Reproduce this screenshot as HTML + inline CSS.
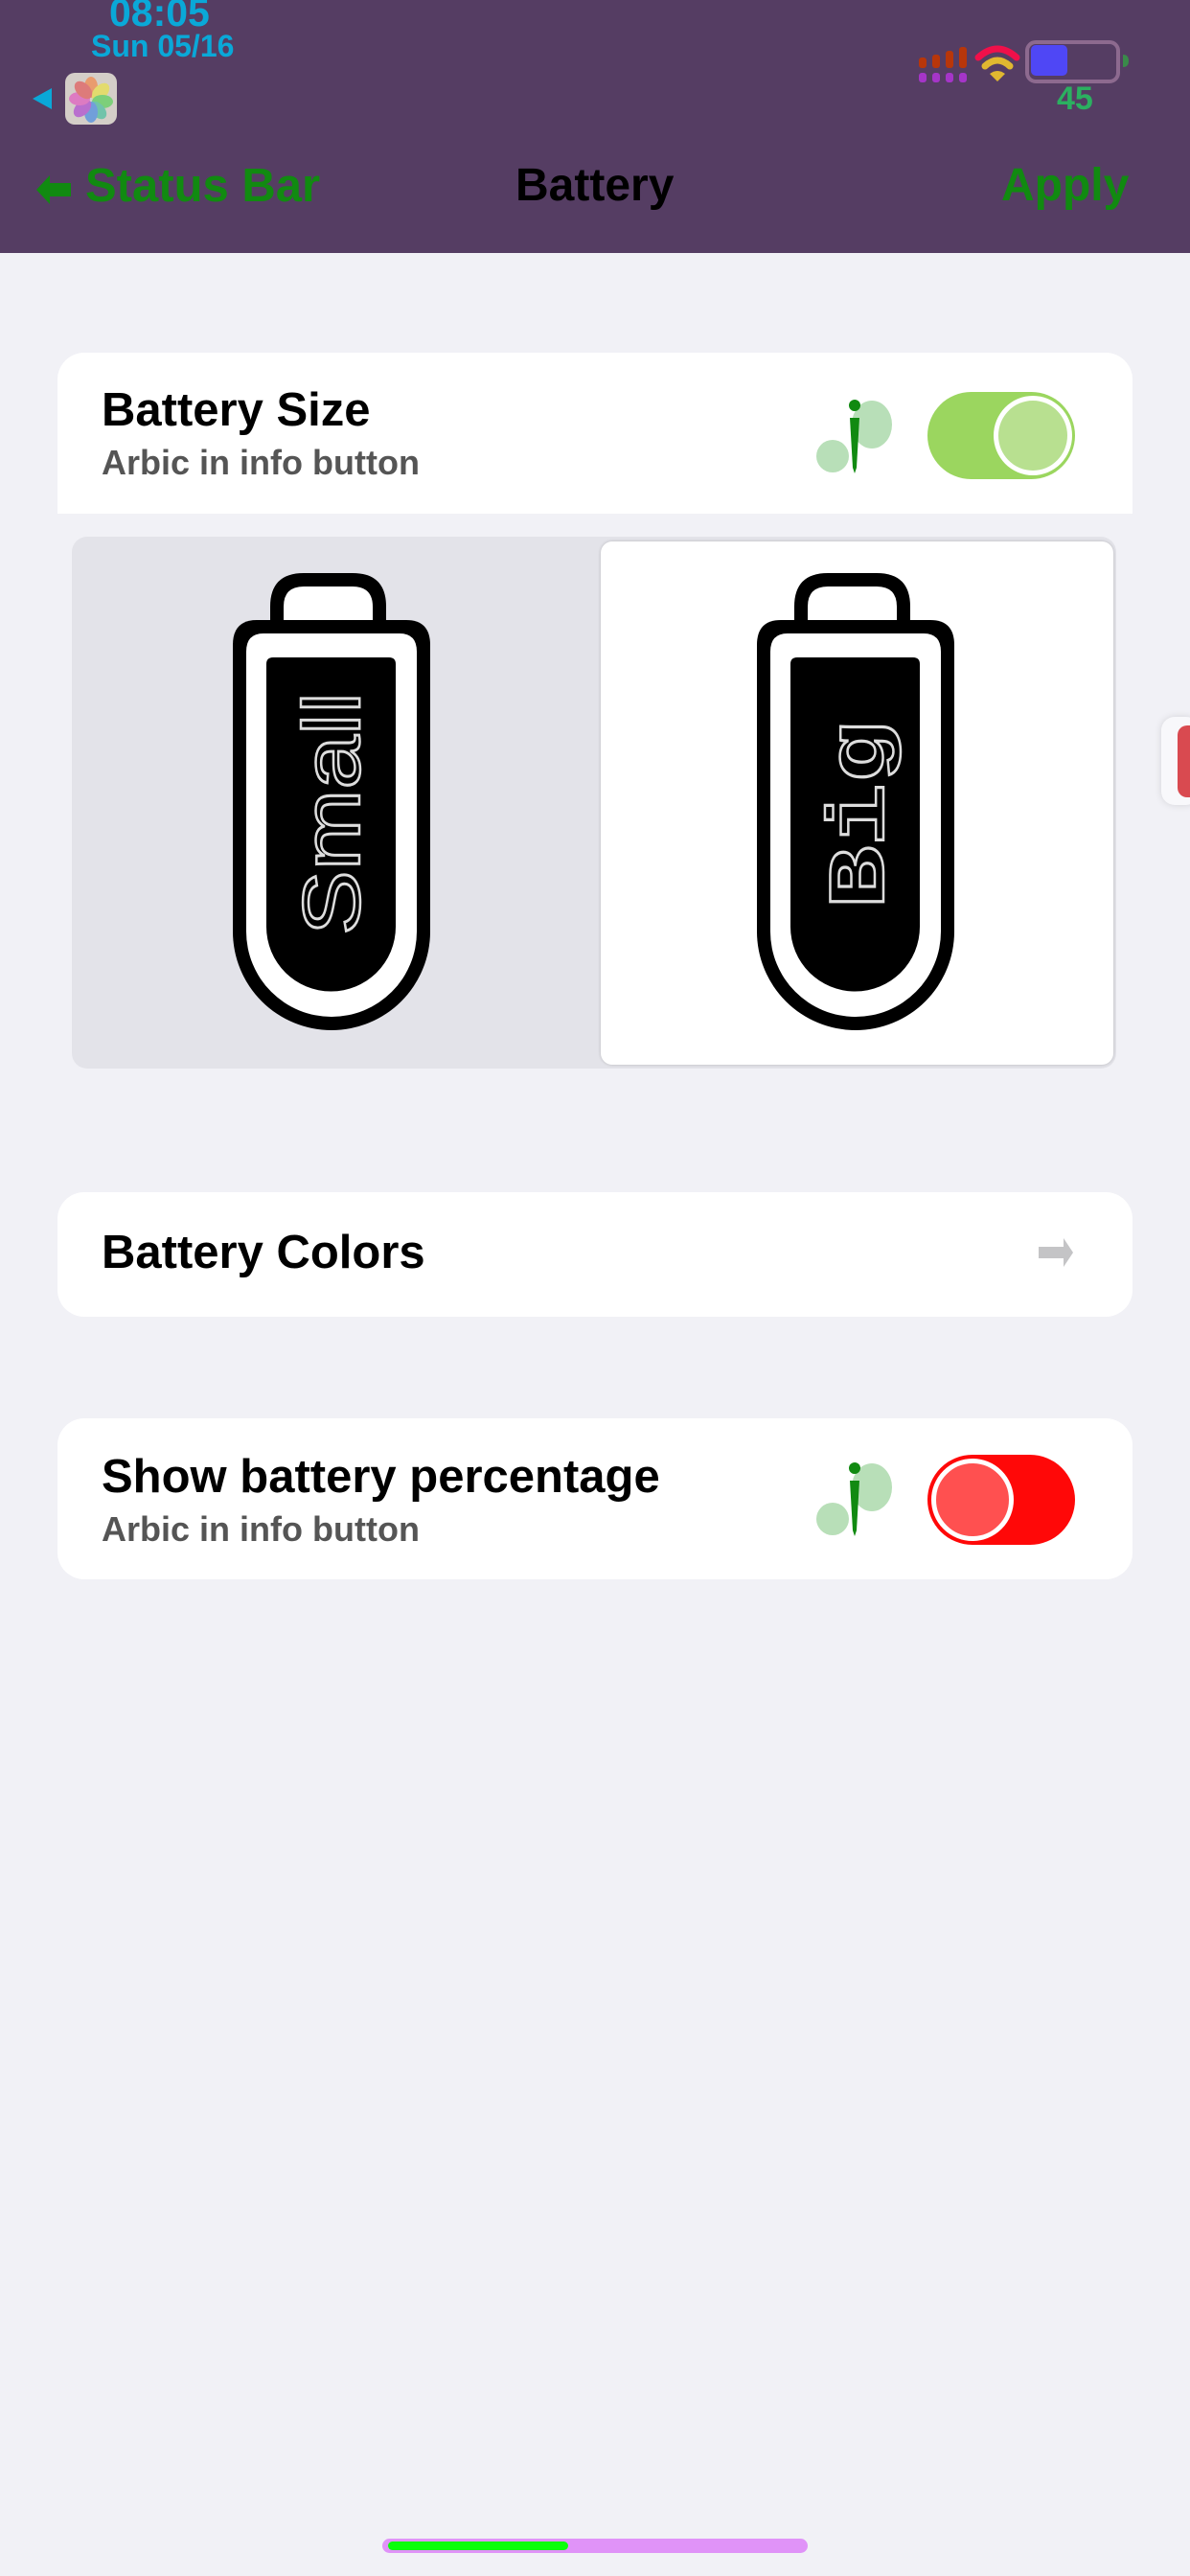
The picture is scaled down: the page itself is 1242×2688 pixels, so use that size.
<!DOCTYPE html>
<html><head><meta charset="utf-8">
<style>
*{margin:0;padding:0;box-sizing:border-box}
body{width:1242px;height:2688px;background:#f1f1f6;font-family:"Liberation Sans",sans-serif;position:relative;overflow:hidden}
.abs{position:absolute}
.hdr{left:0;top:0;width:1242px;height:264px;background:#553d63}
.card{position:absolute;left:60px;width:1122px;background:#fff}
.t{position:absolute;left:46px;font-weight:bold;font-size:49px;color:#000;white-space:nowrap}
.s{position:absolute;left:46px;font-weight:bold;font-size:36px;color:#555;white-space:nowrap}
</style></head><body>
<div class="abs hdr"></div>
<div class="abs" style="left:114px;top:-10px;font-size:41px;font-weight:bold;color:#0aa8d8">08:05</div>
<div class="abs" style="left:95px;top:30px;font-size:32px;font-weight:bold;color:#0aa8d8">Sun 05/16</div>
<svg class="abs" style="left:30px;top:90px" width="26" height="26"><path d="M24,2 L24,24 L4,13Z" fill="#0aa8d8"/></svg>
<svg class="abs" style="left:68px;top:76px" width="54" height="54" viewBox="0 0 54 54">
<rect x="0" y="0" width="54" height="54" rx="10" fill="#d4cec8"/>
<g opacity="0.75">
<ellipse cx="27" cy="15" rx="7" ry="11" fill="#f08a50"/>
<ellipse cx="37" cy="20" rx="7" ry="11" fill="#e8e050" transform="rotate(45 37 20)"/>
<ellipse cx="39" cy="30" rx="7" ry="11" fill="#60d060" transform="rotate(90 39 30)"/>
<ellipse cx="34" cy="39" rx="7" ry="11" fill="#50c0a0" transform="rotate(135 34 39)"/>
<ellipse cx="27" cy="41" rx="7" ry="11" fill="#5090e0"/>
<ellipse cx="18" cy="37" rx="7" ry="11" fill="#b050d0" transform="rotate(45 18 37)"/>
<ellipse cx="15" cy="27" rx="7" ry="11" fill="#e060c0" transform="rotate(90 15 27)"/>
<ellipse cx="19" cy="18" rx="7" ry="11" fill="#e06060" transform="rotate(135 19 18)"/>
</g></svg>
<svg class="abs" style="left:955px;top:40px" width="230" height="50">
<g fill="#b8360a"><rect x="4" y="20" width="8" height="11" rx="3"/><rect x="18" y="17" width="8" height="14" rx="3"/><rect x="32" y="13" width="8" height="18" rx="3"/><rect x="46" y="9" width="8" height="22" rx="3"/></g>
<g fill="#a535c8"><rect x="4" y="36" width="8" height="10" rx="3"/><rect x="18" y="36" width="8" height="10" rx="3"/><rect x="32" y="36" width="8" height="10" rx="3"/><rect x="46" y="36" width="8" height="10" rx="3"/></g>
<path d="M66,20 Q86,2 106,20" stroke="#f0104a" stroke-width="7" fill="none" stroke-linecap="round"/>
<path d="M73,29 Q86,17 99,29" stroke="#e0b830" stroke-width="7" fill="none" stroke-linecap="round"/>
<path d="M78,37 Q86,31 94,37 L86,45Z" fill="#e0b830"/>
<rect x="117" y="4" width="95" height="41" rx="9" fill="none" stroke="#8d6a8f" stroke-width="4"/>
<rect x="121" y="7" width="38" height="32" rx="5" fill="#4f47f5"/>
<path d="M217,17 Q223,17 223,23.5 Q223,30 217,30Z" fill="#3a8a4a"/>
</svg>
<div class="abs" style="left:1103px;top:84px;font-size:34px;font-weight:bold;color:#2bb060">45</div>
<svg class="abs" style="left:36px;top:180px" width="40" height="36"><path d="M2,18 L16,3 V11 H38 V25 H16 V33Z" fill="#118a11"/></svg>
<div class="abs" style="left:89px;top:166px;font-size:49px;font-weight:bold;color:#118a11">Status Bar</div>
<div class="abs" style="left:538px;top:166px;font-size:48px;font-weight:bold;color:#000">Battery</div>
<div class="abs" style="left:1045px;top:166px;font-size:48px;font-weight:bold;color:#118a11">Apply</div>

<div class="card" style="top:368px;height:168px;border-radius:28px 28px 0 0">
<div class="t" style="top:32px">Battery Size</div>
<div class="s" style="top:94px">Arbic in info button</div>
</div>
<svg class="abs" style="left:850px;top:414px" width="82" height="82" viewBox="0 0 82 82">
<ellipse cx="60" cy="29" rx="21" ry="25" fill="#b8dfb8"/><circle cx="19" cy="62" r="17" fill="#b8dfb8"/>
<circle cx="42" cy="9" r="6" fill="#118a11"/><path d="M37,22 L47,22 L44,74 L42,80 L40,74Z" fill="#118a11"/></svg>
<div class="abs" style="left:968px;top:409px;width:154px;height:91px;border-radius:46px;background:#9bd65f"></div>
<div class="abs" style="left:1037px;top:413px;width:82px;height:83px;border-radius:50%;background:#b8e090;border:5px solid #fff"></div>

<div class="abs" style="left:75px;top:560px;width:1090px;height:555px;background:#e3e3e9;border-radius:16px"></div>
<div class="abs" style="left:627px;top:565px;width:535px;height:546px;background:#fff;border-radius:12px;box-shadow:0 0 3px rgba(0,0,0,.2)"></div>
<svg class="abs" style="left:243px;top:598px" width="210" height="480" viewBox="0 0 210 480">
<path d="M39,50 V35 Q39,0 74,0 H125 Q160,0 160,35 V50Z" fill="#000"/><path d="M53,52 V35 Q53,14 74,14 H125 Q146,14 146,35 V52Z" fill="#fff"/>
<path d="M0,75 Q0,49 25,49 H181 Q206,49 206,75 V374 A103,103 0 0 1 0,374 Z" fill="#000"/>
<path d="M14,82 Q14,63 32,63 H174 Q192,63 192,82 V374 A89,89 0 0 1 14,374 Z" fill="#fff"/>
<path d="M35,95 Q35,88 42,88 H163 Q170,88 170,95 V369 A67.5,67.5 0 0 1 35,369 Z" fill="#000"/>
<text transform="translate(132,378) rotate(-90)" font-family="Liberation Sans" font-size="84" fill="#000" stroke="#ddd" stroke-width="2.5" textLength="254" lengthAdjust="spacingAndGlyphs">Small</text>
</svg>
<svg class="abs" style="left:790px;top:598px" width="210" height="480" viewBox="0 0 210 480">
<path d="M39,50 V35 Q39,0 74,0 H125 Q160,0 160,35 V50Z" fill="#000"/><path d="M53,52 V35 Q53,14 74,14 H125 Q146,14 146,35 V52Z" fill="#fff"/>
<path d="M0,75 Q0,49 25,49 H181 Q206,49 206,75 V374 A103,103 0 0 1 0,374 Z" fill="#000"/>
<path d="M14,82 Q14,63 32,63 H174 Q192,63 192,82 V374 A89,89 0 0 1 14,374 Z" fill="#fff"/>
<path d="M35,95 Q35,88 42,88 H163 Q170,88 170,95 V369 A67.5,67.5 0 0 1 35,369 Z" fill="#000"/>
<text transform="translate(132,350) rotate(-90)" font-family="Liberation Mono" font-weight="bold" font-size="84" fill="#000" stroke="#ddd" stroke-width="2.5" textLength="196" lengthAdjust="spacingAndGlyphs">Big</text>
</svg>
<div class="abs" style="left:1212px;top:748px;width:40px;height:92px;background:#f8f8fb;border-radius:14px;box-shadow:0 0 8px rgba(0,0,0,.12)"></div>
<div class="abs" style="left:1229px;top:757px;width:30px;height:75px;background:#d94a50;border-radius:10px"></div>

<div class="card" style="top:1244px;height:130px;border-radius:28px">
<div class="t" style="top:35px">Battery Colors</div>
</div>
<svg class="abs" style="left:1082px;top:1290px" width="42" height="34"><path d="M2,11 H28 V2 L38,17 L28,32 V23 H2Z" fill="#c4c4c6"/></svg>

<div class="card" style="top:1480px;height:168px;border-radius:28px">
<div class="t" style="top:33px">Show battery percentage</div>
<div class="s" style="top:95px">Arbic in info button</div>
</div>
<svg class="abs" style="left:850px;top:1522px" width="82" height="84" viewBox="0 0 82 82">
<ellipse cx="60" cy="29" rx="21" ry="25" fill="#b8dfb8"/><circle cx="19" cy="62" r="17" fill="#b8dfb8"/>
<circle cx="42" cy="9" r="6" fill="#118a11"/><path d="M37,22 L47,22 L44,74 L42,80 L40,74Z" fill="#118a11"/></svg>
<div class="abs" style="left:968px;top:1518px;width:154px;height:94px;border-radius:47px;background:#ff0808"></div>
<div class="abs" style="left:972px;top:1522px;width:86px;height:86px;border-radius:50%;background:#ff5050;border:5px solid #fff"></div>

<div class="abs" style="left:399px;top:2649px;width:444px;height:15px;border-radius:8px;background:#e093f8"></div>
<div class="abs" style="left:405px;top:2652px;width:188px;height:9px;border-radius:5px;background:#0aff0a"></div>
</body></html>
